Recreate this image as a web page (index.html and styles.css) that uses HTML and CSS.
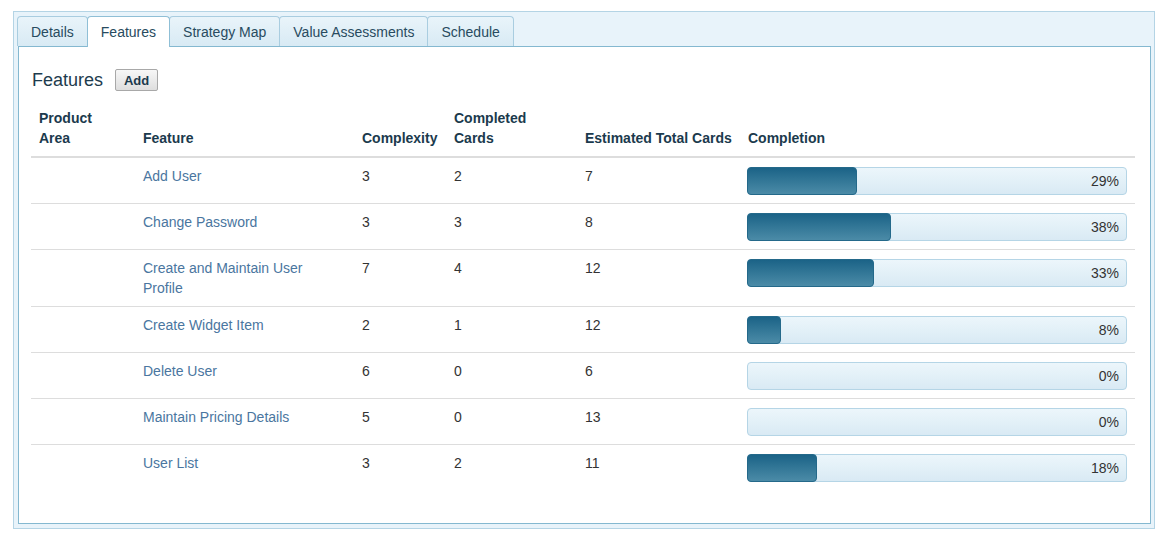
FILE: index.html
```html
<!DOCTYPE html>
<html>
<head>
<meta charset="utf-8">
<link rel="stylesheet" href="styles.css">
</head>
<body>
<div class="tabs">
  <ul class="tab-list">
    <li class="tab">Details</li>
    <li class="tab active">Features</li>
    <li class="tab">Strategy Map</li>
    <li class="tab">Value Assessments</li>
    <li class="tab">Schedule</li>
  </ul>
  <div class="panel">
    <div class="heading">
      <h2 class="title">Features</h2>
      <button class="btn">Add</button>
    </div>
    <table class="grid">
      <colgroup>
        <col class="c1"><col class="c2"><col class="c3"><col class="c4"><col class="c5"><col class="c6">
      </colgroup>
      <thead>
        <tr>
          <th>Product<br>Area</th>
          <th>Feature</th>
          <th>Complexity</th>
          <th>Completed<br>Cards</th>
          <th class="nowrap">Estimated Total Cards</th>
          <th>Completion</th>
        </tr>
      </thead>
      <tbody>
        <tr>
          <td></td><td class="feat"><a class="link">Add User</a></td><td>3</td><td>2</td><td>7</td>
          <td class="prog"><div class="bar"><div class="fill" style="width:29%"></div><span class="pct">29%</span></div></td>
        </tr>
        <tr>
          <td></td><td class="feat"><a class="link">Change Password</a></td><td>3</td><td>3</td><td>8</td>
          <td class="prog"><div class="bar"><div class="fill" style="width:38%"></div><span class="pct">38%</span></div></td>
        </tr>
        <tr>
          <td></td><td class="feat"><a class="link">Create and Maintain User Profile</a></td><td>7</td><td>4</td><td>12</td>
          <td class="prog"><div class="bar"><div class="fill" style="width:33.5%"></div><span class="pct">33%</span></div></td>
        </tr>
        <tr>
          <td></td><td class="feat"><a class="link">Create Widget Item</a></td><td>2</td><td>1</td><td>12</td>
          <td class="prog"><div class="bar"><div class="fill" style="width:9%"></div><span class="pct">8%</span></div></td>
        </tr>
        <tr>
          <td></td><td class="feat"><a class="link">Delete User</a></td><td>6</td><td>0</td><td>6</td>
          <td class="prog"><div class="bar"><span class="pct">0%</span></div></td>
        </tr>
        <tr>
          <td></td><td class="feat"><a class="link">Maintain Pricing Details</a></td><td>5</td><td>0</td><td>13</td>
          <td class="prog"><div class="bar"><span class="pct">0%</span></div></td>
        </tr>
        <tr>
          <td></td><td class="feat"><a class="link">User List</a></td><td>3</td><td>2</td><td>11</td>
          <td class="prog"><div class="bar"><div class="fill" style="width:18.5%"></div><span class="pct">18%</span></div></td>
        </tr>
      </tbody>
    </table>
  </div>
</div>
</body>
</html>
```

FILE: styles.css
```css
html, body {
  margin: 0;
  padding: 0;
  background: #ffffff;
}
body {
  font-family: "Liberation Sans", Arial, sans-serif;
  font-size: 14px;
  color: #333333;
}
.tabs {
  box-sizing: border-box;
  margin: 11px 0 0 13px;
  width: 1142px;
  height: 518px;
  border: 1px solid #b4d4e5;
  background: #e8f3fa;
  padding: 4px 3px 4px 4px;
  display: flex;
  flex-direction: column;
}
.tab-list {
  list-style: none;
  margin: 0 0 -1px 0;
  padding: 0;
  display: flex;
  align-items: flex-start;
}
.tab {
  box-sizing: border-box;
  height: 30px;
  line-height: 31px;
  padding: 0 13px;
  border: 1px solid #a9cde0;
  border-bottom: none;
  border-radius: 4px 4px 0 0;
  background: linear-gradient(#e9f4fa, #d8eaf4);
  color: #284b60;
  margin-left: -1px;
}
.tab:first-child {
  margin-left: -1px;
}
.tab.active {
  height: 31px;
  background: #ffffff;
  position: relative;
  z-index: 1;
  border-color: #8fbfd6;
}
.panel {
  box-sizing: border-box;
  flex: 1;
  border: 1px solid #84b8d0;
  background: #ffffff;
  padding: 22px 14px 0 12px;
}
.heading {
  display: flex;
  align-items: center;
  height: 22px;
}
.title {
  margin: 0 0 0 1px;
  font-size: 18px;
  font-weight: normal;
  color: #1d3b4d;
}
.btn {
  margin-left: 12px;
  box-sizing: border-box;
  height: 22px;
  width: 43px;
  padding: 0;
  border: 1px solid #a8a8a8;
  border-radius: 2px;
  background: linear-gradient(#f7f7f7, #dedede);
  font-family: "Liberation Sans", Arial, sans-serif;
  font-size: 13px;
  font-weight: bold;
  color: #1b3a4d;
}
.grid {
  margin-top: 10px;
  width: 1104px;
  table-layout: fixed;
  border-collapse: collapse;
}
.c1 { width: 104px; }
.c2 { width: 219px; }
.c3 { width: 92px; }
.c4 { width: 131px; }
.c5 { width: 163px; }
.c6 { width: 395px; }
th {
  text-align: left;
  vertical-align: bottom;
  font-weight: bold;
  color: #1b3a4d;
  padding: 8px 8px 8px 8px;
  line-height: 19.6px;
  border-bottom: 2px solid #dddddd;
}
.nowrap {
  white-space: nowrap;
}
td {
  vertical-align: top;
  padding: 9px 8px 8px 8px;
  line-height: 19.6px;
  border-top: 1px solid #dddddd;
}
td.feat {
  padding-right: 20px;
}
td.prog {
  padding-left: 7px;
}
.link {
  color: #4a76a0;
  text-decoration: none;
}
.bar {
  box-sizing: border-box;
  height: 28px;
  border: 1px solid #b5d5e6;
  border-radius: 4px;
  background: linear-gradient(#ecf6fb, #d9eaf4);
  display: grid;
  grid-template-columns: 100%;
  grid-template-rows: 100%;
}
.fill {
  grid-area: 1 / 1;
  margin: -1px 0 -1px -1px;
  box-sizing: border-box;
  border: 1px solid #24698a;
  border-radius: 4px;
  background: linear-gradient(#1b6387, #4b8ba7);
}
.pct {
  grid-area: 1 / 1;
  justify-self: end;
  align-self: center;
  padding-right: 7px;
  line-height: 16px;
  color: #333333;
}
```
